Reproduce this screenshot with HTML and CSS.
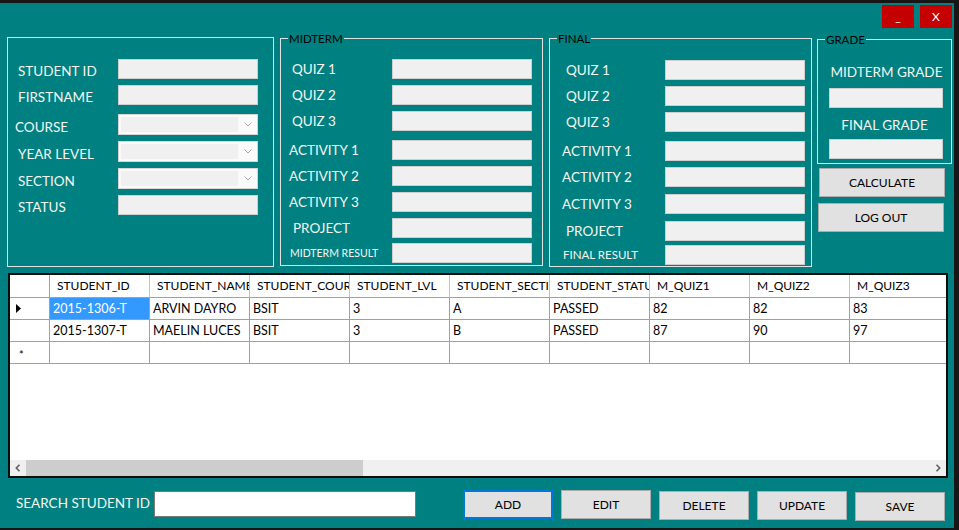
FILE: index.html
```html
<!DOCTYPE html>
<html>
<head>
<meta charset="utf-8">
<title>Student Grades</title>
<link rel="stylesheet" href="styles.css">
</head>
<body>
<div class="window">
  <div class="titlebar">
    <button class="winbtn">_</button>
    <button class="winbtn">X</button>
  </div>

  <div class="top">
    <section class="group g-info">
      <div class="rows">
        <div class="frow"><span class="lbl p10">STUDENT ID</span><span class="tb"></span></div>
        <div class="frow"><span class="lbl p10">FIRSTNAME</span><span class="tb"></span></div>
        <div class="frow c21 gap9"><span class="lbl p7">COURSE</span><span class="cb"><span class="cb-field"></span><span class="cb-arrow"><svg width="8" height="5" viewBox="0 0 8 5"><polyline points="0.5,0.5 4,4 7.5,0.5" fill="none" stroke="#a6a6a6" stroke-width="1"/></svg></span></span></div>
        <div class="frow c21"><span class="lbl p10">YEAR LEVEL</span><span class="cb"><span class="cb-field"></span><span class="cb-arrow"><svg width="8" height="5" viewBox="0 0 8 5"><polyline points="0.5,0.5 4,4 7.5,0.5" fill="none" stroke="#a6a6a6" stroke-width="1"/></svg></span></span></div>
        <div class="frow c21"><span class="lbl p10">SECTION</span><span class="cb"><span class="cb-field"></span><span class="cb-arrow"><svg width="8" height="5" viewBox="0 0 8 5"><polyline points="0.5,0.5 4,4 7.5,0.5" fill="none" stroke="#a6a6a6" stroke-width="1"/></svg></span></span></div>
        <div class="frow"><span class="lbl p10">STATUS</span><span class="tb"></span></div>
      </div>
    </section>

    <section class="group g-mid">
      <div class="gtitle">MIDTERM</div>
      <div class="rows">
        <div class="frow"><span class="lbl p11">QUIZ 1</span><span class="tb"></span></div>
        <div class="frow"><span class="lbl p11">QUIZ 2</span><span class="tb"></span></div>
        <div class="frow"><span class="lbl p11">QUIZ 3</span><span class="tb"></span></div>
        <div class="frow gap9"><span class="lbl p8">ACTIVITY 1</span><span class="tb"></span></div>
        <div class="frow"><span class="lbl p8">ACTIVITY 2</span><span class="tb"></span></div>
        <div class="frow"><span class="lbl p8">ACTIVITY 3</span><span class="tb"></span></div>
        <div class="frow"><span class="lbl p12">PROJECT</span><span class="tb"></span></div>
        <div class="frow gap5"><span class="lbl p9 small-mid">MIDTERM RESULT</span><span class="tb"></span></div>
      </div>
    </section>

    <section class="group g-final">
      <div class="gtitle">FINAL</div>
      <div class="rows">
        <div class="frow"><span class="lbl p16">QUIZ 1</span><span class="tb"></span></div>
        <div class="frow"><span class="lbl p16">QUIZ 2</span><span class="tb"></span></div>
        <div class="frow"><span class="lbl p16">QUIZ 3</span><span class="tb"></span></div>
        <div class="frow gap9"><span class="lbl p12">ACTIVITY 1</span><span class="tb"></span></div>
        <div class="frow"><span class="lbl p12">ACTIVITY 2</span><span class="tb"></span></div>
        <div class="frow gap7"><span class="lbl p12">ACTIVITY 3</span><span class="tb"></span></div>
        <div class="frow gap7"><span class="lbl p16">PROJECT</span><span class="tb"></span></div>
        <div class="frow gap4"><span class="lbl p13 small-final">FINAL RESULT</span><span class="tb"></span></div>
      </div>
    </section>

    <div class="side">
      <section class="group g-grade">
        <div class="gtitle">GRADE</div>
        <div class="glbl glbl-first">MIDTERM GRADE</div>
        <div class="tb gtb gtb-first"></div>
        <div class="glbl glbl-second">FINAL GRADE</div>
        <div class="tb gtb gtb-second"></div>
      </section>
      <button class="btn btn-calc">CALCULATE</button>
      <button class="btn btn-logout">LOG OUT</button>
    </div>
  </div>

  <div class="grid">
    <div class="dg-row dg-head">
      <div class="rh rh-head"></div>
      <div class="dh">STUDENT_ID</div>
      <div class="dh">STUDENT_NAME</div>
      <div class="dh">STUDENT_COURSE</div>
      <div class="dh">STUDENT_LVL</div>
      <div class="dh">STUDENT_SECTION</div>
      <div class="dh">STUDENT_STATUS</div>
      <div class="dh">M_QUIZ1</div>
      <div class="dh">M_QUIZ2</div>
      <div class="dh">M_QUIZ3</div>
    </div>
    <div class="dg-row">
      <div class="rh"><svg width="5" height="9" viewBox="0 0 5 9"><polygon points="0,0 5,4.5 0,9" fill="#000"/></svg></div>
      <div class="dc sel">2015-1306-T</div>
      <div class="dc">ARVIN DAYRO</div>
      <div class="dc">BSIT</div>
      <div class="dc">3</div>
      <div class="dc">A</div>
      <div class="dc">PASSED</div>
      <div class="dc">82</div>
      <div class="dc">82</div>
      <div class="dc">83</div>
    </div>
    <div class="dg-row">
      <div class="rh"></div>
      <div class="dc">2015-1307-T</div>
      <div class="dc">MAELIN LUCES</div>
      <div class="dc">BSIT</div>
      <div class="dc">3</div>
      <div class="dc">B</div>
      <div class="dc">PASSED</div>
      <div class="dc">87</div>
      <div class="dc">90</div>
      <div class="dc">97</div>
    </div>
    <div class="dg-row">
      <div class="rh rh-new">*</div>
      <div class="dc"></div>
      <div class="dc"></div>
      <div class="dc"></div>
      <div class="dc"></div>
      <div class="dc"></div>
      <div class="dc"></div>
      <div class="dc"></div>
      <div class="dc"></div>
      <div class="dc"></div>
    </div>
    <div class="hscroll">
      <span class="sb-arrow"><svg width="6" height="8" viewBox="0 0 6 8"><polyline points="4.5,0.8 1.3,4 4.5,7.2" fill="none" stroke="#606060" stroke-width="1.6"/></svg></span>
      <span class="sb-thumb"></span>
      <span class="sb-track"></span>
      <span class="sb-arrow"><svg width="6" height="8" viewBox="0 0 6 8"><polyline points="1.5,0.8 4.7,4 1.5,7.2" fill="none" stroke="#606060" stroke-width="1.6"/></svg></span>
    </div>
  </div>

  <div class="bottom">
    <span class="search-lbl">SEARCH STUDENT ID</span>
    <span class="search-box"></span>
    <button class="btn bbtn b-add">ADD</button>
    <button class="btn bbtn b-edit">EDIT</button>
    <button class="btn bbtn b-delete">DELETE</button>
    <button class="btn bbtn b-update">UPDATE</button>
    <button class="btn bbtn b-save">SAVE</button>
  </div>
</div>
</body>
</html>
```

FILE: styles.css
```css
* { box-sizing: border-box; }

body {
  margin: 0;
  width: 959px;
  height: 530px;
  overflow: hidden;
  background: #161616;
  font-family: Lato, "Open Sans", "DejaVu Sans", sans-serif;
}

.window {
  margin-top: 3px;
  width: 954px;
  height: 525px;
  background: #008080;
  display: flex;
  flex-direction: column;
}

/* title bar buttons */
.titlebar {
  height: 29px;
  display: flex;
  justify-content: flex-end;
  gap: 6px;
  padding: 2px 2px 0 0;
}
.winbtn {
  width: 32px;
  height: 23px;
  padding: 0;
  border: 0;
  background: #c40000;
  color: #ffffff;
  font-family: Lato, "Open Sans", sans-serif;
  font-size: 12px;
}

/* top area */
.top {
  height: 235px;
  display: flex;
  align-items: flex-start;
  padding-left: 7px;
}
.group {
  border: 1px solid #e2e2e2;
}
.g-info  { width: 267px; height: 230px; margin-top: 5px; }
.g-mid   { width: 263px; height: 228px; margin-top: 6px; margin-left: 6px; }
.g-final { width: 263px; height: 229px; margin-top: 6px; margin-left: 6px; }
.side    { width: 136px; margin-left: 5px; }
.g-grade { width: 135px; height: 125px; margin-top: 7px; }

.gtitle {
  width: max-content;
  margin: -7px 0 0 7px;
  padding: 0 1px;
  background: #008080;
  color: #000;
  font-size: 11.5px;
  line-height: 13px;
}

.g-info .rows  { padding-top: 21px; }
.g-mid .rows   { padding-top: 14px; }
.g-final .rows { padding-top: 15px; }

.frow {
  display: flex;
  align-items: center;
  height: 20px;
}
.frow.c21 { height: 21px; }
.frow + .frow { margin-top: 6px; }
.frow + .frow.gap9 { margin-top: 9px; }
.frow + .frow.gap7 { margin-top: 7px; }
.frow + .frow.gap5 { margin-top: 5px; }
.frow + .frow.gap4 { margin-top: 4px; }

.lbl {
  flex: none;
  color: #f6f6f2;
  font-size: 13.5px;
  line-height: 16px;
  white-space: nowrap;
}
.g-info .lbl  { width: 110px; padding-top: 4px; }
.g-mid .lbl   { width: 111px; }
.g-final .lbl { width: 115px; }
.p7  { padding-left: 7px; }
.p8  { padding-left: 8px; }
.p9  { padding-left: 9px; }
.p10 { padding-left: 10px; }
.p11 { padding-left: 11px; }
.p12 { padding-left: 12px; }
.p13 { padding-left: 13px; }
.p16 { padding-left: 16px; }
.small-mid   { font-size: 10.5px; }
.small-final { font-size: 11.5px; }

.tb {
  display: block;
  width: 140px;
  height: 20px;
  background: #f0f0f0;
  border: 1px solid #cfcfcf;
}

.cb {
  display: flex;
  width: 140px;
  height: 21px;
  background: #fafafa;
  border: 1px solid #d6d6d6;
}
.cb-field {
  flex: 1;
  margin: 2px 0 2px 2px;
  background: #f0f0f0;
}
.cb-arrow {
  width: 19px;
  display: flex;
  align-items: center;
  justify-content: center;
}

/* grade group */
.glbl {
  text-align: center;
  color: #f6f6f2;
  font-size: 13.5px;
  line-height: 20px;
}
.glbl-first  { margin-top: 16px; padding-left: 4px; }
.glbl-second { margin-top: 7px; }
.gtb { width: 114px; margin-left: 11px; }
.gtb-first  { margin-top: 6px; }
.gtb-second { margin-top: 4px; }

/* buttons */
.btn {
  padding: 0;
  background: #e1e1e1;
  border: 1px solid #adadad;
  color: #000;
  font-family: Lato, "Open Sans", sans-serif;
  font-size: 12px;
}
.btn-calc   { display: block; width: 126px; height: 29px; margin: 4px 0 0 2px; }
.btn-logout { display: block; width: 126px; height: 29px; margin: 6px 0 0 1px; }

/* data grid */
.grid {
  margin: 6px 0 0 8px;
  width: 940px;
  height: 205px;
  border: 2px solid #0c0c0c;
  background: #ffffff;
  display: flex;
  flex-direction: column;
  overflow: hidden;
}
.dg-row {
  display: flex;
  height: 22px;
  flex: none;
}
.dg-head { height: 23px; }

.rh {
  flex: 0 0 40px;
  border-right: 1px solid #a0a0a0;
  border-bottom: 1px solid #a0a0a0;
  display: flex;
  align-items: center;
  padding-left: 6px;
}
.rh-new {
  font-size: 11px;
  line-height: 1;
  padding-left: 9px;
  padding-top: 4px;
  color: #000;
}
.dh {
  flex: 0 0 100px;
  border-right: 1px solid #c4c4c4;
  border-bottom: 1px solid #a0a0a0;
  padding-left: 7px;
  font-size: 12px;
  line-height: 22px;
  color: #000;
  white-space: nowrap;
  overflow: hidden;
}
.dc {
  flex: 0 0 100px;
  border-right: 1px solid #a0a0a0;
  border-bottom: 1px solid #a0a0a0;
  padding-left: 3px;
  font-size: 12.5px;
  line-height: 21px;
  color: #000;
  white-space: nowrap;
  overflow: hidden;
}
.dc.sel {
  background: #3399ff;
  color: #ffffff;
}

.hscroll {
  margin-top: auto;
  height: 16px;
  flex: none;
  display: flex;
  background: #f0f0f0;
}
.sb-arrow {
  width: 16px;
  display: flex;
  align-items: center;
  justify-content: center;
}
.sb-thumb {
  width: 337px;
  background: #cdcdcd;
}
.sb-track { flex: 1; }

/* bottom bar */
.bottom {
  display: flex;
  align-items: flex-start;
  margin-top: 12px;
  padding-left: 16px;
}
.search-lbl {
  width: 138px;
  color: #f6f6f2;
  font-size: 13.5px;
  line-height: 26px;
  white-space: nowrap;
}
.search-box {
  width: 262px;
  height: 26px;
  margin-top: 1px;
  background: #ffffff;
  border: 1px solid #7a7a7a;
}
.bbtn { width: 90px; height: 29px; margin-left: 8px; }
.b-add { margin-left: 47px; border: 2px solid #0078d7; }
.b-delete, .b-update { margin-top: 1px; }
.b-save { margin-top: 2px; }
```
